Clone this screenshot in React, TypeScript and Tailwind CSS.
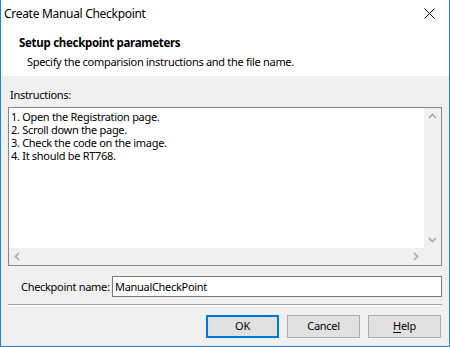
import React from "react";

const Chevron = ({ dir }: { dir: "up" | "down" | "left" | "right" }) => {
  const paths: Record<string, string> = {
    up: "M1 6 L4.5 2.5 L8 6",
    down: "M1 3 L4.5 6.5 L8 3",
    left: "M6 1 L2.5 4.5 L6 8",
    right: "M3 1 L6.5 4.5 L3 8",
  };
  return (
    <svg width="9" height="9" viewBox="0 0 9 9">
      <path d={paths[dir]} fill="none" stroke="#a6a6a6" strokeWidth="1.6" />
    </svg>
  );
};

const Button = ({ children, primary }: { children: React.ReactNode; primary?: boolean }) => (
  <button
    className={
      primary
        ? "w-[73px] h-[23px] bg-[#e1e1e1] border-2 border-[#0078d7] text-black"
        : "w-[73px] h-[23px] bg-[#e1e1e1] border border-[#adadad] text-black"
    }
  >
    {children}
  </button>
);

export default function App() {
  const lines = [
    "1. Open the Registration page.",
    "2. Scroll down the page.",
    "3. Check the code on the image.",
    "4. It should be RT768.",
  ];

  return (
    <div
      className="w-[450px] h-[347px] flex flex-col bg-[#f0f0f0] border-x border-b border-[#1883d7] text-[11px] tracking-[-0.3px] text-black overflow-hidden"
      style={{ fontFamily: '"Noto Sans", "Open Sans", sans-serif' }}
    >
      <div className="bg-white h-[76px] flex flex-col shrink-0">
        <div className="h-[27px] flex items-center justify-between pl-[3px] pr-[14px]">
          <span className="text-[12px]">Create Manual Checkpoint</span>
          <svg width="11" height="11" viewBox="0 0 11 11">
            <path d="M0.5 0.5 L10.5 10.5 M10.5 0.5 L0.5 10.5" stroke="#000" strokeWidth="1" />
          </svg>
        </div>
        <div className="pl-[18px] pt-[8px] text-[11.5px] font-bold leading-[16px]">Setup checkpoint parameters</div>
        <div className="pl-[26px] pt-[3px] leading-[16px]">
          Specify the comparision instructions and the file name.
        </div>
      </div>

      <div className="flex flex-col px-[7px] flex-1">
        <div className="pl-[2px] pt-[11px] h-[31px] leading-[16px]">Instructions:</div>
        <div className="h-[159px] border border-[#828790] bg-white flex flex-col">
          <div className="flex flex-1 min-h-0">
            <div className="flex-1 px-[2px] pt-[2px] leading-[13px]">
              {lines.map((l) => (
                <div key={l}>{l}</div>
              ))}
            </div>
            <div className="w-[17px] bg-[#f0f0f0] flex flex-col justify-between items-center py-[4px]">
              <Chevron dir="up" />
              <Chevron dir="down" />
            </div>
          </div>
          <div className="h-[17px] flex">
            <div className="flex-1 bg-[#f0f0f0] flex items-center justify-between px-[4px]">
              <Chevron dir="left" />
              <Chevron dir="right" />
            </div>
            <div className="w-[17px] bg-[#f0f0f0]" />
          </div>
        </div>

        <div className="flex items-center mt-[10px] h-[21px]">
          <span className="w-[104px] pl-[13px] leading-[16px] whitespace-nowrap">Checkpoint name:</span>
          <div className="flex-1 h-[21px] border border-[#7a7a7a] bg-white flex items-center pl-[2px] leading-[16px]">
            ManualCheckPoint
          </div>
        </div>

        <div className="mt-[7px] border-t border-[#a0a0a0] border-b border-b-white" />

        <div className="flex justify-end gap-[8px] mt-[9px] pr-[1px]">
          <Button primary>OK</Button>
          <Button>Cancel</Button>
          <Button>
            <span className="underline underline-offset-2">H</span>elp
          </Button>
        </div>
      </div>
    </div>
  );
}
